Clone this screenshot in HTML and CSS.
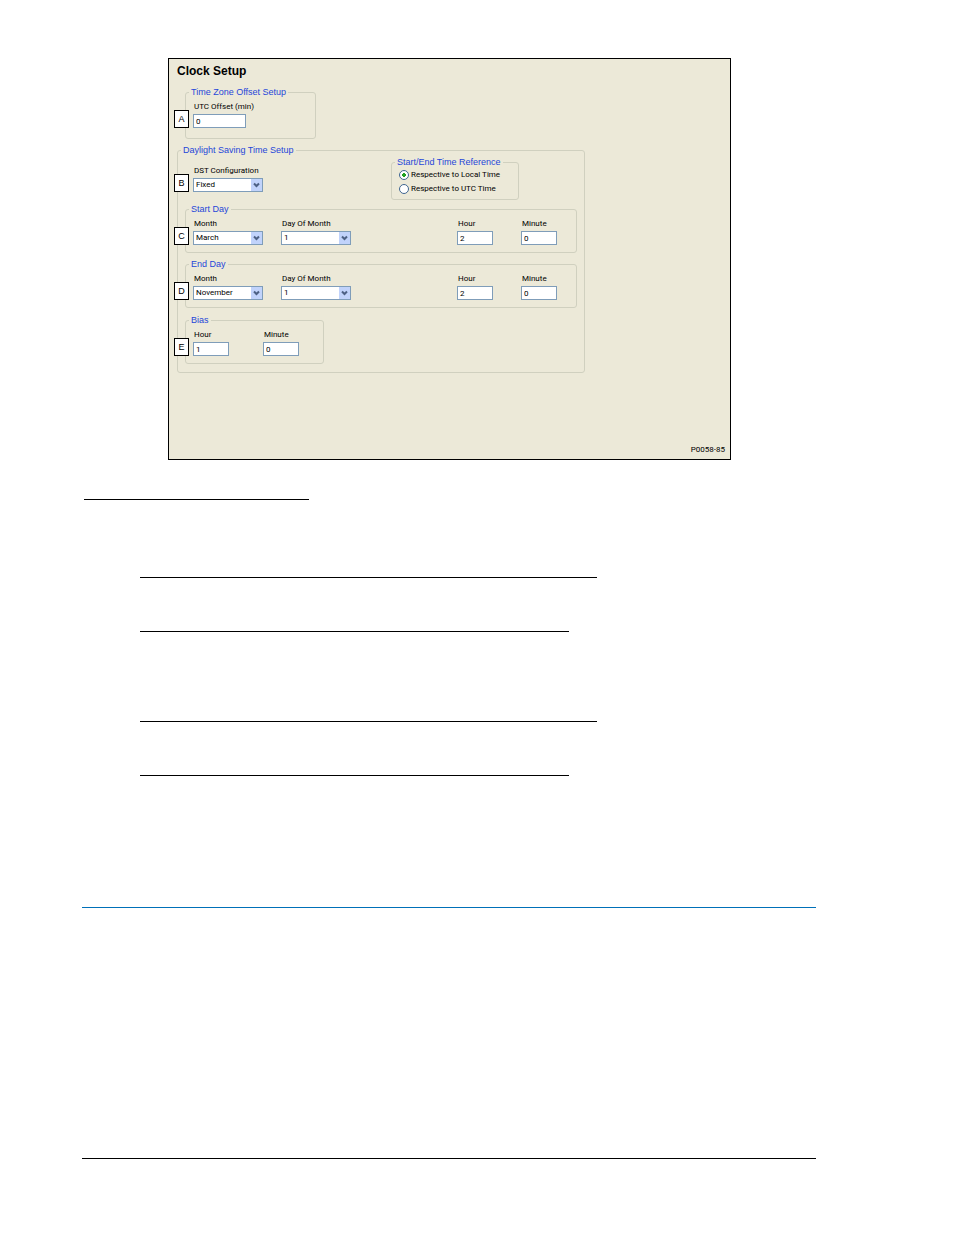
FILE: index.html
```
<!DOCTYPE html>
<html lang="en">

<head>
    <meta charset="UTF-8">
    <meta name="viewport" content="width=device-width, initial-scale=1.0">
    <title>Clock Setup</title>
    <link rel="stylesheet" href="styles.css">
</head>

<body>
    <main class="page">
        <form class="panel">
            <h1>Clock Setup</h1>

            <fieldset class="group timezone">
                <legend>Time Zone Offset Setup</legend>
                <div class="row">
                    <span class="badge">A</span>
                    <div class="field offset">
                        <label for="utcOffset">UTC Offset (min)</label>
                        <input type="text" id="utcOffset" value="0">
                    </div>
                </div>
            </fieldset>

            <fieldset class="group dst">
                <legend>Daylight Saving Time Setup</legend>
                <div class="config">
                    <div class="row">
                        <span class="badge">B</span>
                        <div class="field choice">
                            <label for="dstConfig">DST Configuration</label>
                            <div class="select">
                                <select id="dstConfig"><option>Fixed</option></select>
                                <svg viewBox="0 0 11 12"><path d="M3 4.5l2.5 2.5L8 4.5"/></svg>
                            </div>
                        </div>
                    </div>
                    <fieldset class="group reference">
                        <legend>Start/End Time Reference</legend>
                        <label><input type="radio" name="reference" checked>Respective to Local Time</label>
                        <label><input type="radio" name="reference">Respective to UTC Time</label>
                    </fieldset>
                </div>

                <fieldset class="group">
                    <legend>Start Day</legend>
                    <div class="row day">
                        <span class="badge">C</span>
                        <div class="field choice">
                            <label for="startMonth">Month</label>
                            <div class="select">
                                <select id="startMonth"><option>March</option></select>
                                <svg viewBox="0 0 11 12"><path d="M3 4.5l2.5 2.5L8 4.5"/></svg>
                            </div>
                        </div>
                        <div class="field choice">
                            <label for="startDay">Day Of Month</label>
                            <div class="select">
                                <select id="startDay"><option>1</option></select>
                                <svg viewBox="0 0 11 12"><path d="M3 4.5l2.5 2.5L8 4.5"/></svg>
                            </div>
                        </div>
                        <div class="field time">
                            <label for="startHour">Hour</label>
                            <input type="text" id="startHour" value="2">
                        </div>
                        <div class="field time">
                            <label for="startMinute">Minute</label>
                            <input type="text" id="startMinute" value="0">
                        </div>
                    </div>
                </fieldset>

                <fieldset class="group">
                    <legend>End Day</legend>
                    <div class="row day">
                        <span class="badge">D</span>
                        <div class="field choice">
                            <label for="endMonth">Month</label>
                            <div class="select">
                                <select id="endMonth"><option>November</option></select>
                                <svg viewBox="0 0 11 12"><path d="M3 4.5l2.5 2.5L8 4.5"/></svg>
                            </div>
                        </div>
                        <div class="field choice">
                            <label for="endDay">Day Of Month</label>
                            <div class="select">
                                <select id="endDay"><option>1</option></select>
                                <svg viewBox="0 0 11 12"><path d="M3 4.5l2.5 2.5L8 4.5"/></svg>
                            </div>
                        </div>
                        <div class="field time">
                            <label for="endHour">Hour</label>
                            <input type="text" id="endHour" value="2">
                        </div>
                        <div class="field time">
                            <label for="endMinute">Minute</label>
                            <input type="text" id="endMinute" value="0">
                        </div>
                    </div>
                </fieldset>

                <fieldset class="group bias">
                    <legend>Bias</legend>
                    <div class="row">
                        <span class="badge">E</span>
                        <div class="field time">
                            <label for="biasHour">Hour</label>
                            <input type="text" id="biasHour" value="1">
                        </div>
                        <div class="field time">
                            <label for="biasMinute">Minute</label>
                            <input type="text" id="biasMinute" value="0">
                        </div>
                    </div>
                </fieldset>
            </fieldset>

            <p class="figure-id">P0058-85</p>
        </form>

        <hr class="rule heading">
        <hr class="rule long first">
        <hr class="rule short">
        <hr class="rule long">
        <hr class="rule short">
        <hr class="rule section">
        <hr class="rule footer">
    </main>
</body>

</html>
```
FILE: styles.css
```
:root {
    --panel-color: #ece9d8;
    --group-border: #d0d0bf;
    --input-border: #7f9db9;
    --legend-color: #1f46d8;
}

* {
    box-sizing: border-box;
}

body {
    margin: 0;
    background-color: white;
    color: black;
    font-family: 'Liberation Sans', Arial, sans-serif;
}

.page {
    padding: 58px 138px 76px 82px;
}

.panel {
    margin: 0 85px 0 86px;
    padding: 5px 5px 3px 8px;
    background-color: var(--panel-color);
    border: 1px solid black;
    font-family: Roboto, 'Liberation Sans', sans-serif;
    font-size: 8px;
    line-height: 12px;
}

h1 {
    margin: 0;
    font-family: 'Liberation Sans', Arial, sans-serif;
    font-size: 12px;
    line-height: 14px;
}

.group {
    min-width: 0;
    margin: 5px 0 0;
    padding: 3px 7px 7px;
    border: 1px solid var(--group-border);
    border-radius: 3px;
}

legend {
    margin-left: -4px;
    padding: 0 2px;
    color: var(--legend-color);
    font-family: 'Liberation Sans', Arial, sans-serif;
    font-size: 9px;
}

.timezone {
    max-width: 131px;
    margin: 8px 0 0 8px;
    padding-bottom: 10px;
}

.dst {
    max-width: 408px;
    padding-top: 0;
    padding-bottom: 8px;
}

.bias {
    max-width: 139px;
    margin-top: 6px;
}

.config {
    display: flex;
    justify-content: space-between;
    padding: 0 58px 0 8px;
}

.config .row {
    margin-top: 9px;
    align-self: flex-start;
}

.reference {
    width: 128px;
    margin: 0 0 -2px;
    padding: 0 7px 3px;
}

.reference label {
    display: flex;
    align-items: center;
    gap: 2px;
    height: 14px;
    white-space: nowrap;
}

/* the badge hangs over the left border of the group */
.row {
    position: relative;
    display: flex;
    gap: 34px;
}

.day {
    gap: 18px;
    padding-right: 2px;
}

.badge {
    position: absolute;
    left: -19px;
    bottom: 0;
    width: 15px;
    height: 18px;
    background-color: white;
    border: 1px solid black;
    font-family: 'Liberation Sans', Arial, sans-serif;
    font-size: 9px;
    line-height: 16px;
    text-align: center;
}

.field label {
    display: block;
    padding-left: 1px;
    margin-bottom: 1px;
    white-space: nowrap;
}

.offset {
    width: 53px;
}

.choice {
    width: 70px;
}

.time {
    width: 36px;
}

.day .time {
    margin-right: 10px;
}

.day .choice + .time {
    margin-left: auto;
}

input[type=text],
select {
    display: block;
    width: 100%;
    height: 14px;
    margin: 0;
    padding: 0 2px;
    background-color: white;
    border: 1px solid var(--input-border);
    border-radius: 0;
    color: black;
    font: inherit;
    appearance: none;
}

.select {
    position: relative;
}

.select svg {
    position: absolute;
    top: 1px;
    right: 1px;
    width: 11px;
    height: 12px;
    background-color: #c1d3fb;
    fill: none;
    stroke: #4d6185;
    stroke-width: 2;
    pointer-events: none;
}

input[type=radio] {
    width: 10px;
    height: 10px;
    margin: 0;
    background-color: white;
    border: 1px solid #3f6590;
    border-radius: 50%;
    appearance: none;
}

input[type=radio]:checked {
    background-image: radial-gradient(circle, #21a121 2px, transparent 2px);
}

.figure-id {
    margin: 71px 0 0;
    text-align: right;
}

.rule {
    max-width: 100%;
    height: 1px;
    margin: 0;
    background-color: black;
    border: none;
}

.heading {
    width: 225px;
    margin: 39px 0 0 2px;
}

.long {
    width: 457px;
    margin: 89px 0 0 58px;
}

.first {
    margin-top: 77px;
}

.short {
    width: 429px;
    margin: 53px 0 0 58px;
}

.section {
    margin-top: 131px;
    background-color: #0070b8;
}

.footer {
    margin-top: 250px;
}
```
